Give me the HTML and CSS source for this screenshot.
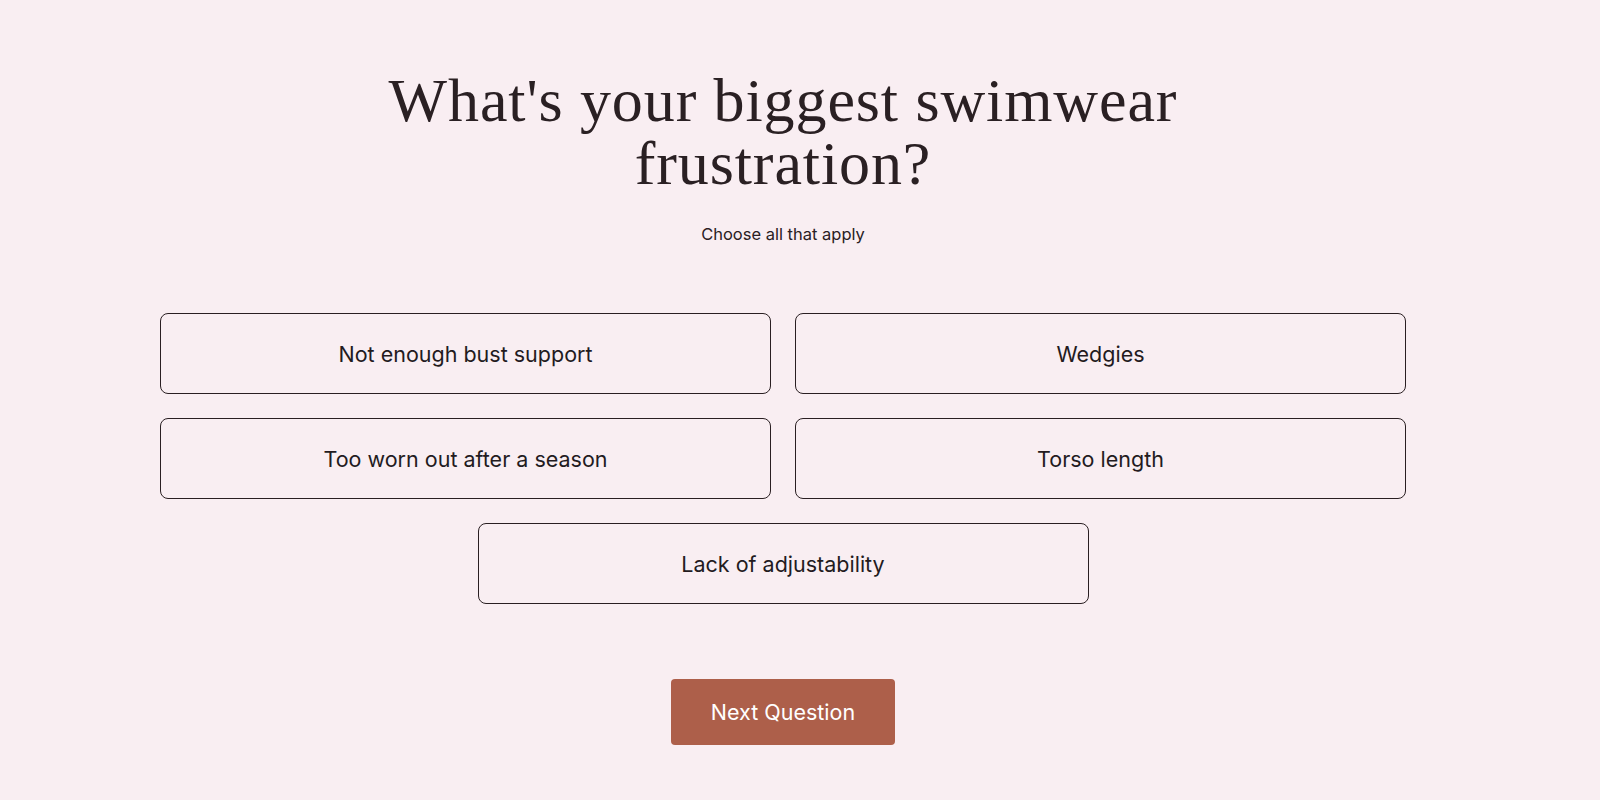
FILE: index.html
```html
<!DOCTYPE html>
<html lang="en">
<head>
<meta charset="utf-8">
<title>Quiz</title>
<link rel="stylesheet" href="styles.css">
</head>
<body>
<main class="page">
  <h1 class="title">What's your biggest swimwear<br>frustration?</h1>
  <p class="subtitle">Choose all that apply</p>
  <div class="options">
    <button class="option">Not enough bust support</button>
    <button class="option">Wedgies</button>
    <button class="option">Too worn out after a season</button>
    <button class="option">Torso length</button>
    <button class="option option-center">Lack of adjustability</button>
  </div>
  <div class="actions">
    <button class="next">Next Question</button>
  </div>
</main>
</body>
</html>
```
FILE: styles.css
```css
html, body {
  margin: 0;
  padding: 0;
  background: #f9eef2;
  height: 100%;
}
body {
  font-family: "Inter", "Liberation Sans", sans-serif;
  color: #231b1e;
}
.page {
  width: 1246px;
  margin-left: 160px;
  padding-top: 69px;
  display: flex;
  flex-direction: column;
  align-items: center;
}
.title {
  margin: 0;
  font-family: "Liberation Serif", "DejaVu Serif", serif;
  font-weight: 400;
  font-size: 62px;
  line-height: 63px;
  text-align: center;
  color: #2a2023;
  letter-spacing: 0.9px;
}
.subtitle {
  margin: 29px 0 0;
  font-size: 16.5px;
  line-height: 20px;
  color: #2a2023;
}
.options {
  margin-top: 69px;
  width: 100%;
  display: grid;
  grid-template-columns: 1fr 1fr;
  column-gap: 24px;
  row-gap: 24px;
}
.option {
  height: 81px;
  background: transparent;
  border: 1.5px solid #2a1f22;
  border-radius: 8px;
  font-family: "Inter", "Liberation Sans", sans-serif;
  font-size: 21.5px;
  color: #231b1e;
  padding: 0;
}
.option-center {
  grid-column: 1 / span 2;
  justify-self: center;
  width: calc(50% - 12px);
}
.actions {
  margin-top: 75px;
}
.next {
  width: 224px;
  height: 66px;
  background: #ad5f4a;
  border: none;
  border-radius: 4px;
  color: #fff;
  font-family: "Inter", "Liberation Sans", sans-serif;
  font-size: 21.5px;
}
```
